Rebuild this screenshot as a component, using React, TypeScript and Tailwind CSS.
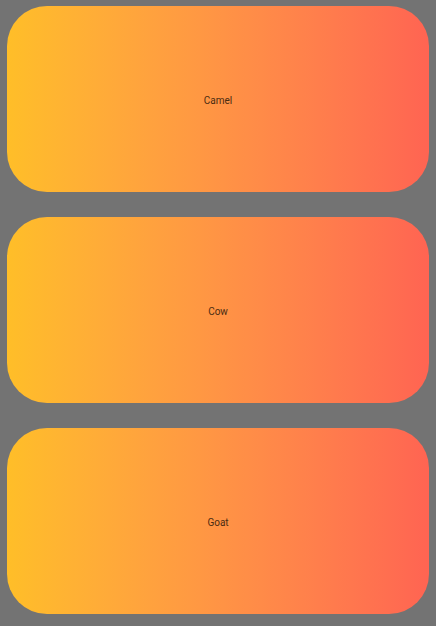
const animals = ["Camel", "Cow", "Goat"];

export default function App() {
  return (
    <div className="w-[436px] h-[626px] bg-[#737373] px-[7px] pt-[6px] flex flex-col gap-[25px] font-['Roboto',sans-serif]">
      {animals.map((name) => (
        <div
          key={name}
          className="h-[186px] w-full rounded-[40px] bg-gradient-to-r from-[#ffbe28] to-[#ff6452] flex items-center justify-center"
        >
          <span className="mt-[3px] text-[10px] text-[#4a2c12]">{name}</span>
        </div>
      ))}
    </div>
  );
}
